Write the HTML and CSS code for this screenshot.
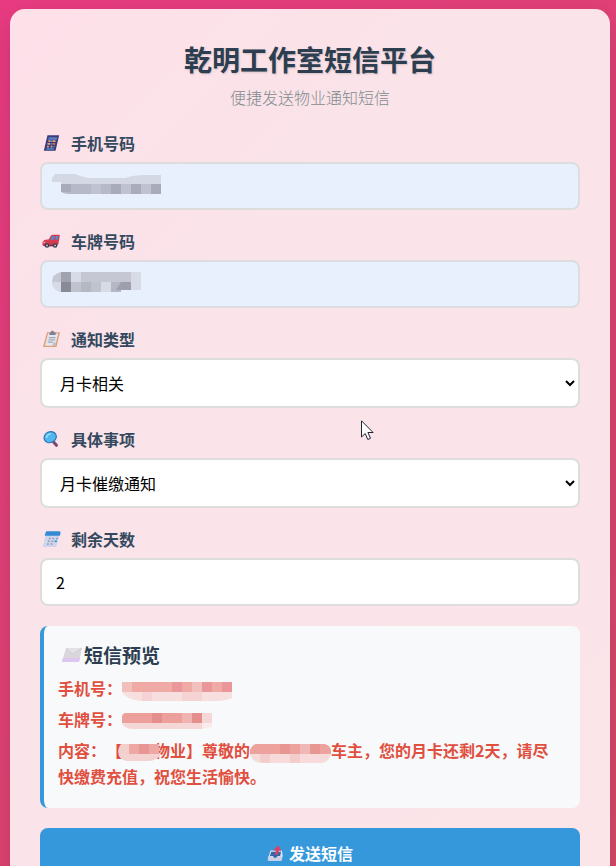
FILE: index.html
```html
<!DOCTYPE html>
<html lang="zh-CN">
<head>
    <meta charset="UTF-8">
    <meta name="viewport" content="width=device-width, initial-scale=1.0">
    <title>乾明工作室短信平台</title>
    <link rel="stylesheet" href="styles.css">
</head>
<body>
    <div class="container">
        <header class="header">
            <h1>乾明工作室短信平台</h1>
            <p>便捷发送物业通知短信</p>
        </header>

        <form id="smsForm">
            <div class="form-group">
                <label for="phone">
                    <svg class="icon" viewBox="0 0 20 20" aria-hidden="true">
                        <path d="M5.500 1.500h13l-4 17H1.500z" fill="#3d3a78"/>
                        <path d="M7 3.500h9.500l-.8 3H6.300z" fill="#5d7fc0"/>
                        <path d="M6.500 8h2.500M11 8h3.500M5.500 11h3M5 14h2M9 14h2" stroke="#e9a27a" stroke-width="2"/>
                        <path d="M9 11h2M12 14h1.500M9 8h1.500M4.500 16.500h8" stroke="#4c9be0" stroke-width="1.500"/>
                        <path d="M11.500 11h2.500" stroke="#e8703a" stroke-width="2"/>
                    </svg>
                    手机号码
                </label>
                <div class="field">
                    <input type="tel" id="phone" class="filled">
                    <svg class="mask" width="112" height="22" viewBox="0 0 112 22" aria-hidden="true">
                        <path d="M3 1h20q10 4 16 4h34q8-3 20-3h16v9H9V9H0V5z" fill="#d3d8e4"/>
                        <path d="M9 11h100v10H17q-5 0-8-2z" fill="#b6b9c7"/>
                        <path d="M9 11h10v8H9zM59 11h10v10H59zM79 11h10v10H79zM99 11h10v10H99z" fill="#a9abba"/>
                        <path d="M39 11h10v10H39zM69 11h10v10H69zM89 11h10v10H89z" fill="#bfc3d0"/>
                    </svg>
                </div>
            </div>

            <div class="form-group">
                <label for="plate">
                    <svg class="icon" viewBox="0 0 20 20" aria-hidden="true">
                        <path d="M0 11l2-2 5-1 2.500-4q.5-1 2-1h6.500q1.500 0 1.200 1.500L17.500 14l-3 1.500H1.500q-1.500 0-1.500-1z" fill="#d33c50"/>
                        <path d="M8.500 8.500l2.200-4h3L12.500 8.500zM14 8.500l1-4h3l-1 4z" fill="#5888c8"/>
                        <path d="M2 15h13" stroke="#8e2c52" stroke-width="2"/>
                        <circle cx="5" cy="15" r="2.500" fill="#343b50"/>
                        <circle cx="14" cy="15" r="2.500" fill="#343b50"/>
                        <circle cx="5" cy="15" r="1" fill="#c9ccd8"/>
                        <circle cx="14" cy="15" r="1" fill="#c9ccd8"/>
                        <path d="M1 11.500h2" stroke="#ffd7a5"/>
                    </svg>
                    车牌号码
                </label>
                <div class="field">
                    <input type="text" id="plate" class="filled">
                    <svg class="mask" width="112" height="22" viewBox="0 0 112 22" aria-hidden="true">
                        <path d="M9 1h80v10H0q0-8 9-10z" fill="#c5c8d3"/>
                        <path d="M0 11h49v10H9q-8-2-9-10z" fill="#c0c3ce"/>
                        <path d="M9 1h10v10H9z" fill="#a0a3af"/>
                        <path d="M9 11h10v10H9z" fill="#888b97"/>
                        <path d="M0 11h9v10q-8-2-9-10zM19 1h10v10H19zM49 11h10v10H49zM79 1h10v10H79zM79 11h10v8H79z" fill="#d7dbe6"/>
                        <path d="M29 11h10v10H29zM59 11h10v10H59z" fill="#b4b7c4"/>
                        <path d="M69 11h10v8H64z" fill="#9d9fae"/>
                    </svg>
                </div>
            </div>

            <div class="form-group">
                <label for="noticeType">
                    <svg class="icon" viewBox="0 0 20 20" aria-hidden="true">
                        <path d="M5 2.500h14.500l-4 16.500H.500z" fill="#e1a077"/>
                        <path d="M6.200 4h11.200L14 17.500H2.700z" fill="#e4e6ee"/>
                        <path d="M9 2.500q2-4 4 0l2 .5-.7 2.500H7.500L8 3z" fill="#7c8294"/>
                        <path d="M7 8.500h7.500M6.500 11h7.500M5.700 13.500h6" stroke="#a1a8bc" stroke-width="1.200"/>
                        <path d="M11 17.500l1-3.500h3l-1 3.500z" fill="#b8bccb"/>
                    </svg>
                    通知类型
                </label>
                <select id="noticeType">
                    <option>月卡相关</option>
                </select>
            </div>

            <div class="form-group">
                <label for="noticeItem">
                    <svg class="icon" viewBox="0 0 20 20" aria-hidden="true">
                        <path d="M12 13l3.500 4" stroke="#7d4a73" stroke-width="3.500" stroke-linecap="round"/>
                        <ellipse cx="8.500" cy="8" rx="7" ry="6" fill="#4fb8ec" stroke="#3474b8" stroke-width="1.300" transform="rotate(-25 8.500 8)"/>
                        <path d="M4.500 9q0-4 5-5" fill="none" stroke="#a1e3fa" stroke-width="1.500"/>
                    </svg>
                    具体事项
                </label>
                <select id="noticeItem">
                    <option>月卡催缴通知</option>
                </select>
            </div>

            <div class="form-group">
                <label for="days">
                    <svg class="icon" viewBox="0 0 20 20" aria-hidden="true">
                        <path d="M4 4h15.500l-4 14q-.4 1-1.500 1H1.500q-1.500 0-1-1.500z" fill="#cfd5ea"/>
                        <path d="M5 1.500h13.500q2 0 1.500 2l-.7 3H2.500L3.400 3Q3.700 1.500 5 1.500z" fill="#348ad3"/>
                        <path d="M7 9.500h2M11 9.500h2M15 9.500h2M6 12.500h2M10 12.500h2M5 15.500h2M9 15.500h2" stroke="#8f99b8" stroke-width="1.600"/>
                        <path d="M13.500 12.500h2.500" stroke="#2c9be4" stroke-width="2"/>
                    </svg>
                    剩余天数
                </label>
                <input type="text" inputmode="numeric" id="days" value="2">
            </div>

            <section class="preview">
                <h3>
                    <svg class="envelope" viewBox="0 0 20 16" aria-hidden="true">
                        <path d="M4 1h16l-3 14H0z" fill="#d9d6dc"/>
                        <path d="M1 11l-1 4h17l1-4z" fill="#dcc5ee"/>
                        <path d="M4 1l6.500 6L20 1" fill="#e3e1e4" stroke="#cbc6ce" stroke-width=".6"/>
                    </svg>短信预览
                </h3>
                <p>手机号：<svg class="blur-text" width="112" height="20" viewBox="0 0 112 20" aria-hidden="true">
                        <path d="M0 1h110v10H0z" fill="#efaaa6"/>
                        <path d="M0 11h110v6q-6 3-16 3H18q-14-2-18-9z" fill="#f7dfe0"/>
                        <path d="M0 1h10v10H0zM70 1h10v10H70z" fill="#f1bfbc"/>
                        <path d="M50 1h10v10H50zM80 1h10v10H80zM100 1h10v10h-10z" fill="#e9979a"/>
                        <path d="M20 11h10v9H20zM60 11h20v9H60z" fill="#f5d3d4"/>
                    </svg></p>
                <p>车牌号：<svg class="blur-text" width="112" height="20" viewBox="0 0 112 20" aria-hidden="true">
                        <path d="M3 1h77v10H0V5q0-3 3-4z" fill="#ec9f9b"/>
                        <path d="M0 11h80v6H12Q2 17 0 11zM80 1h10v10H80z" fill="#f5d7d8"/>
                        <path d="M30 1h10v10H30zM70 1h10v10H70z" fill="#e58e8e"/>
                        <path d="M60 1h10v10H60z" fill="#efb4b1"/>
                        <path d="M80 11h10v4l-10 2z" fill="#faeaeb"/>
                    </svg></p>
                <p>内容：【<svg class="blur-text over" width="42" height="20" viewBox="0 0 42 20" aria-hidden="true">
                        <path d="M5 1h35v10H0V6q1-5 5-5z" fill="#eda8a4"/>
                        <path d="M0 11h42q-4 7-12 7H8q-7-1-8-7z" fill="#f5d2d2"/>
                        <path d="M5 1h5v10H0V6q1-5 5-5z" fill="#f3cfcc"/>
                        <path d="M20 1h10v10H20z" fill="#e89694"/>
                    </svg>物业】尊敬的<svg class="blur-text" width="81" height="20" viewBox="0 0 81 20" aria-hidden="true">
                        <path d="M6 1h69q6 2 6 7v3H0V7q2-5 6-6z" fill="#eda29e"/>
                        <path d="M0 11h81q-3 9-10 9H14Q2 20 0 11z" fill="#f7dada"/>
                        <path d="M30 1h10v10H30zM60 1h10v10H60z" fill="#e89691"/>
                        <path d="M50 1h10v10H50z" fill="#f0b8b5"/>
                        <path d="M10 11h10v9H14l-4-1zM40 11h10v9H40z" fill="#f3cccc"/>
                    </svg>车主，您的月卡还剩2天，请尽快缴费充值，祝您生活愉快。</p>
            </section>

            <button type="submit" class="send-btn">
                <svg class="icon" viewBox="0 0 20 20" aria-hidden="true">
                    <path d="M4 7h13.500l1 6-1.500 6H2l-1-1z" fill="#dde4f5"/>
                    <path d="M5 8.500h11.500l-1 5h-3l-1.500 2H8l-1-2H3.500z" fill="#3567a8"/>
                    <path d="M1 14h5.500l1.500 2h4l1.500-2h4.500l-1.300 5H1z" fill="#c9d1e8"/>
                    <path d="M9.500 12l1-5H7.500L13 1l4 6h-3l-1 5z" fill="#d94166"/>
                </svg>
                发送短信
            </button>
        </form>
    </div>

    <svg class="pointer" width="14" height="21" viewBox="0 0 14 21" aria-hidden="true">
        <path d="M.5 .8v16.200l3.700-3.500 2.600 6 2.700-1.200-2.600-5.800h5.200z" fill="#fff" stroke="#1c2433"/>
    </svg>
</body>
</html>
```
FILE: styles.css
```css
* {
    box-sizing: border-box;
    margin: 0;
    padding: 0;
}
body {
    font-family: 'Noto Sans CJK SC', 'Noto Sans', sans-serif;
    font-size: 16px;
    line-height: 26px;
    color: #34495e;
    background: linear-gradient(135deg, #e93b82, #d64a66);
    padding: 9px 6px 20px 10px;
    min-height: 100vh;
    text-spacing-trim: space-all;
}
.container {
    max-width: 600px;
    margin: 0 auto;
    padding: 30px;
    border-radius: 15px;
    background: linear-gradient(135deg, #fee0e9, #fae3e9 30%, #fbe5e9);
    box-shadow: 0 10px 30px rgba(0, 0, 0, 0.15);
}
.header {
    text-align: center;
    margin-bottom: 22px;
}
.header h1 {
    font-size: 28px;
    line-height: 40px;
    color: #2c3e50;
    text-shadow: 1px 1px 2px rgba(0, 0, 0, 0.15);
}
.header p {
    margin-top: 5px;
    color: #7f8c8d;
    font-weight: 300;
}
.form-group {
    margin-bottom: 20px;
}
label {
    display: flex;
    align-items: center;
    gap: 10px;
    height: 22px;
    padding-left: 2px;
    margin-bottom: 8px;
    font-weight: 600;
}
.icon {
    width: 19px;
    height: 18px;
    flex: none;
}
.field {
    position: relative;
}
input,
select {
    display: block;
    width: 100%;
    height: 48px;
    padding: 10px 14px;
    border: 2px solid #ddd;
    border-radius: 8px;
    background-color: #fff;
    color: #000;
    font-family: inherit;
    font-size: 16px;
}
select {
    height: 50px;
    padding-right: 0;
}
.filled {
    background-color: #e8f0fe;
}
/* 打码区域 */
.mask {
    position: absolute;
    left: 12px;
    top: 11px;
}
.blur-text {
    vertical-align: middle;
}
.blur-text.over {
    position: relative;
    margin: 0 -7px 0 -3px;
}
.preview {
    padding: 15px 20px 14px 14px;
    margin-bottom: 20px;
    background: #f8f9fa;
    border-left: 4px solid #3498db;
    border-radius: 8px;
}
.preview h3 {
    display: flex;
    align-items: center;
    gap: 2px;
    padding-left: 4px;
    margin-bottom: 6px;
    font-size: 19px;
    line-height: 28px;
    color: #2c3e50;
}
.envelope {
    width: 20px;
    height: 16px;
}
.preview p {
    margin-bottom: 5px;
    color: #e04f3f;
    font-weight: 600;
}
.send-btn {
    display: flex;
    align-items: center;
    justify-content: center;
    gap: 5px;
    width: 100%;
    height: 50px;
    border: none;
    border-radius: 8px;
    background: #3498db;
    color: #fff;
    font-family: inherit;
    font-size: 16px;
    font-weight: 600;
    cursor: pointer;
}
.send-btn:hover {
    background: #2980b9;
}
.send-btn .icon {
    width: 17px;
}
/* 鼠标指针 */
.pointer {
    position: absolute;
    left: 361px;
    top: 420px;
    pointer-events: none;
}
```
